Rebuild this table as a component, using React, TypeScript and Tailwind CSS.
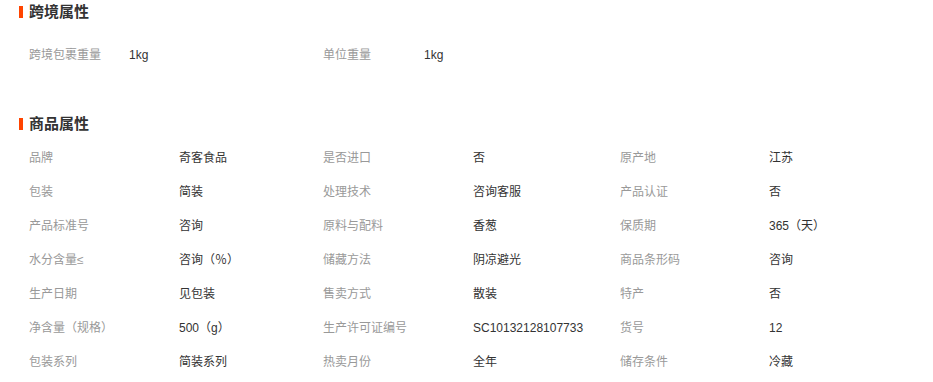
import React from "react";

const font = { fontFamily: '"Liberation Sans", "Noto Sans CJK SC", sans-serif' };

const rows: [string, string, string, string, string, string][] = [
  ["品牌", "奇客食品", "是否进口", "否", "原产地", "江苏"],
  ["包装", "简装", "处理技术", "咨询客服", "产品认证", "否"],
  ["产品标准号", "咨询", "原料与配料", "香葱", "保质期", "365（天）"],
  ["水分含量≤", "咨询（％）", "储藏方法", "阴凉避光", "商品条形码", "咨询"],
  ["生产日期", "见包装", "售卖方式", "散装", "特产", "否"],
  ["净含量（规格）", "500（g）", "生产许可证编号", "SC10132128107733", "货号", "12"],
  ["包装系列", "简装系列", "热卖月份", "全年", "储存条件", "冷藏"],
];

function Heading({ title }: { title: string }) {
  return (
    <div className="flex h-[24px] items-center pl-[19px]">
      <span className="mr-[6px] h-[12px] w-[4px] bg-[#ff4400]" />
      <span className="text-[15px] font-bold text-[#333333]">{title}</span>
    </div>
  );
}

export default function App() {
  return (
    <div className="w-[933px] h-[382px] bg-white overflow-hidden text-[12px]" style={font}>
      <Heading title="跨境属性" />
      <div className="mt-[14px] grid h-[34px] grid-cols-[100px_194px_101px_1fr] items-center pl-[29px]">
        <span className="text-[#999999]">跨境包裹重量</span>
        <span className="text-[#333333]">1kg</span>
        <span className="text-[#999999]">单位重量</span>
        <span className="text-[#333333]">1kg</span>
      </div>
      <div className="mt-[40px]">
        <Heading title="商品属性" />
      </div>
      <div className="mt-[5px] pl-[29px]">
        {rows.map((r, i) => (
          <div key={i} className="grid h-[34px] grid-cols-[150px_144px_150px_147px_149px_1fr] items-center">
            {r.map((c, j) => (
              <span key={j} className={j % 2 === 0 ? "text-[#999999]" : "text-[#333333]"}>
                {c}
              </span>
            ))}
          </div>
        ))}
      </div>
    </div>
  );
}
